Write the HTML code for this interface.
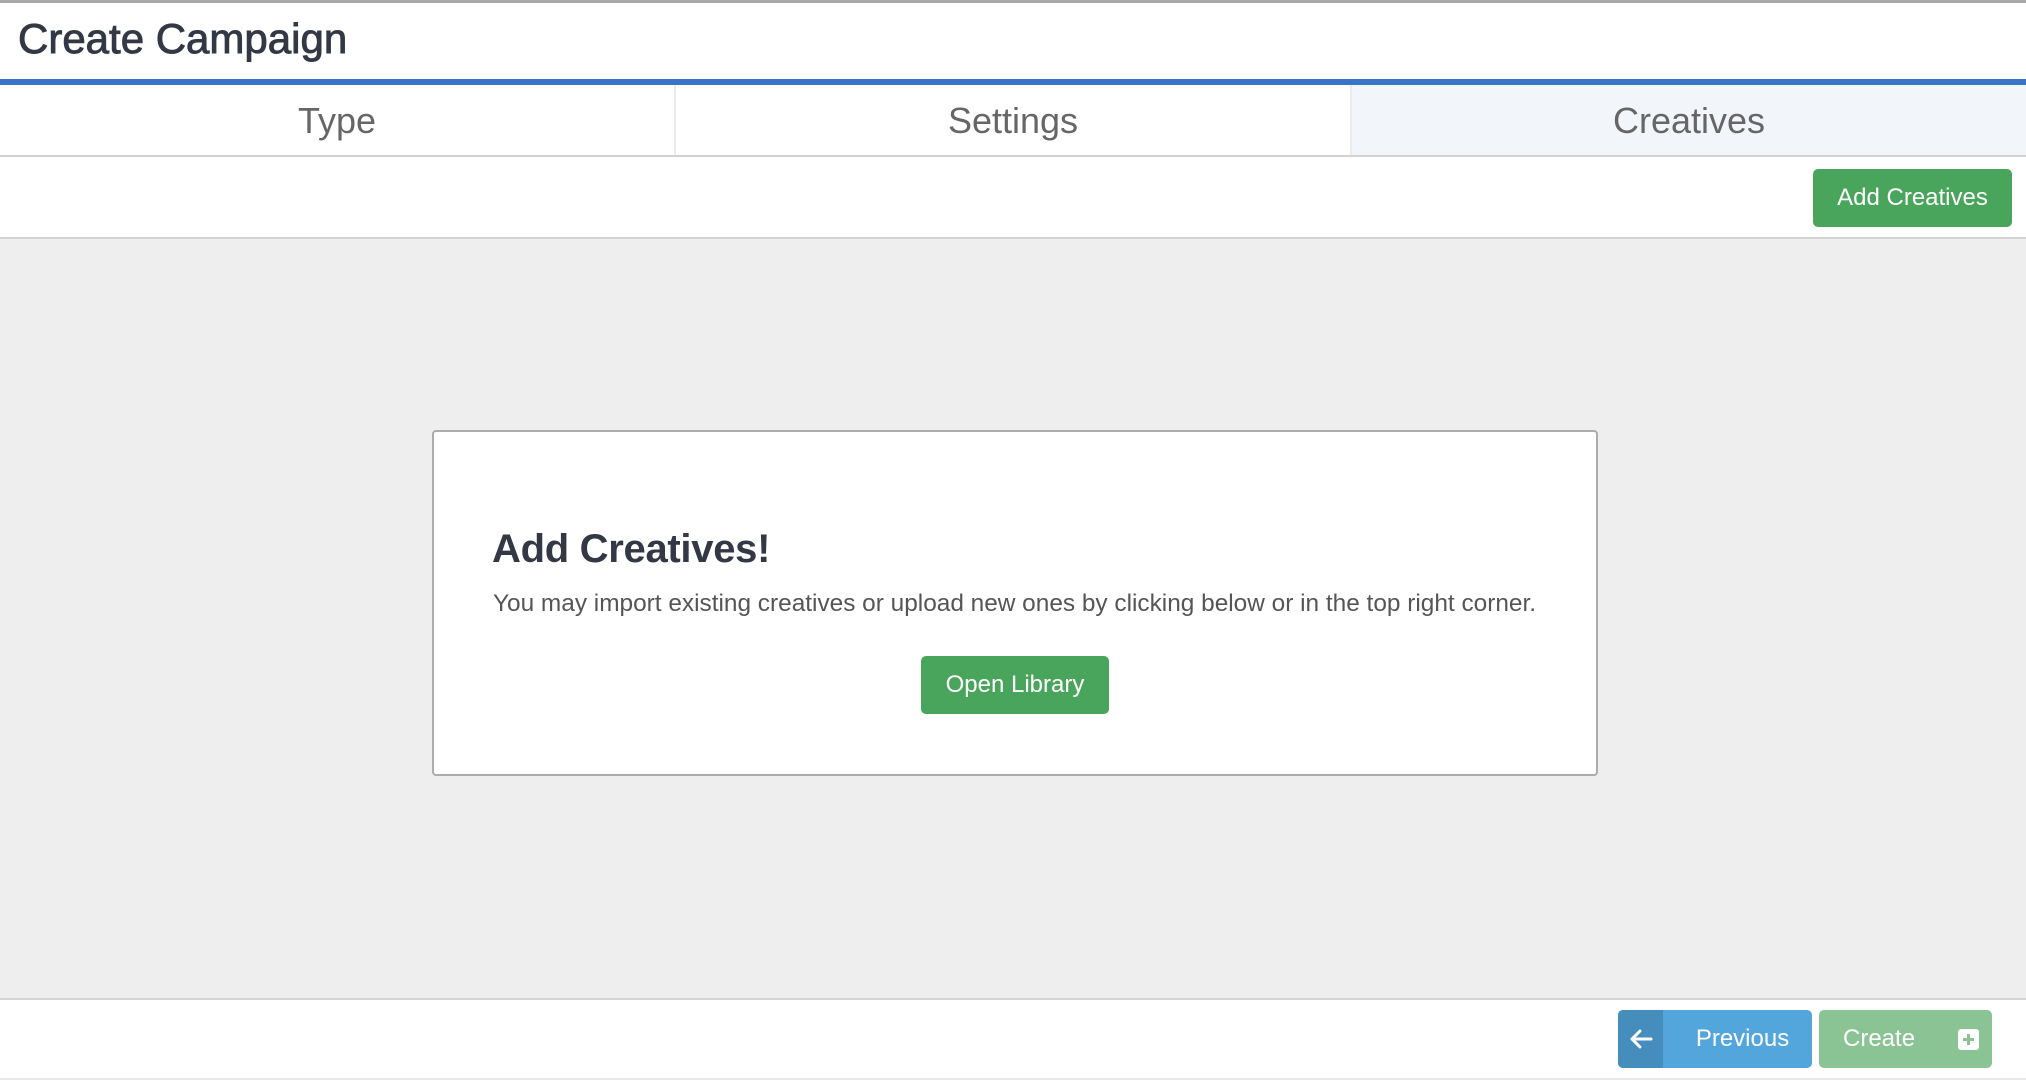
<!DOCTYPE html>
<html><head><meta charset="utf-8"><style>
*{box-sizing:border-box;margin:0;padding:0}
body{width:2026px;height:1080px;overflow:hidden;background:#fff;font-family:"Liberation Sans",Helvetica,Arial,sans-serif;position:relative}
.abs{position:absolute}
.btn{position:absolute;color:#fff;border-radius:5px;display:flex;align-items:center;justify-content:center}
</style></head><body>
<div class="abs" style="left:0;top:0;width:2026px;height:3px;background:#a9a9a9"></div>
<div class="abs" style="left:18px;top:14px;font-size:42px;color:#333844;line-height:50px;-webkit-text-stroke:0.9px #333844">Create Campaign</div>
<div class="abs" style="left:0;top:79px;width:2026px;height:6px;background:#3a74c8"></div>
<div class="abs" style="left:0;top:85px;width:2026px;height:71px;display:flex;font-size:36px;color:#666">
 <div style="flex:1;display:flex;align-items:center;justify-content:center;border-right:2px solid #ececec">Type</div>
 <div style="flex:1;display:flex;align-items:center;justify-content:center;border-right:2px solid #ececec">Settings</div>
 <div style="flex:1;display:flex;align-items:center;justify-content:center;background:#f2f5fa">Creatives</div>
</div>
<div class="abs" style="left:0;top:155px;width:2026px;height:2px;background:#d2d2d2"></div>
<div class="btn" style="left:1813px;top:169px;width:199px;height:58px;background:#4aa55c;font-size:24px">Add Creatives</div>
<div class="abs" style="left:0;top:237px;width:2026px;height:763px;background:#eeeeee;border-top:2px solid #d4d4d4;border-bottom:2px solid #d4d4d4"></div>
<div class="abs" style="left:432px;top:430px;width:1166px;height:346px;background:#fff;border:2px solid #acacac;border-radius:4px"></div>
<div class="abs" style="left:492px;top:521px;font-size:40px;font-weight:bold;color:#333844;line-height:56px;letter-spacing:-0.3px">Add Creatives!</div>
<div class="abs" style="left:493px;top:589px;font-size:24.4px;color:#555;line-height:30px">You may import existing creatives or upload new ones by clicking below or in the top right corner.</div>
<div class="btn" style="left:921px;top:656px;width:188px;height:58px;background:#4aa55c;font-size:24px">Open Library</div>
<div class="abs" style="left:0;top:1078px;width:2026px;height:2px;background:#e8e8e8"></div>
<div class="btn" style="left:1618px;top:1010px;width:194px;height:58px;background:#52a6dc;overflow:hidden;justify-content:flex-start">
 <div style="width:45px;height:58px;background:#448dbd;display:flex;align-items:center;justify-content:center">
  <svg width="24" height="20" viewBox="0 0 24 20"><path d="M22 10H3M11 2L3 10L11 18" stroke="#fff" stroke-width="3" fill="none" stroke-linecap="round" stroke-linejoin="round"/></svg>
 </div>
 <div style="flex:1;text-align:center;font-size:24px;padding-left:10px">Previous</div>
</div>
<div class="btn" style="left:1819px;top:1010px;width:173px;height:58px;background:#8ac495;justify-content:flex-start;font-size:24px">
 <span style="margin-left:24px">Create</span>
 <span style="position:absolute;left:139px;top:19px;width:21px;height:21px;background:#fff;border-radius:3px"><svg width="21" height="21" viewBox="0 0 21 21"><path d="M10.5 5v11M5 10.5h11" stroke="#8ac495" stroke-width="3"/></svg></span>
</div>
</body></html>
